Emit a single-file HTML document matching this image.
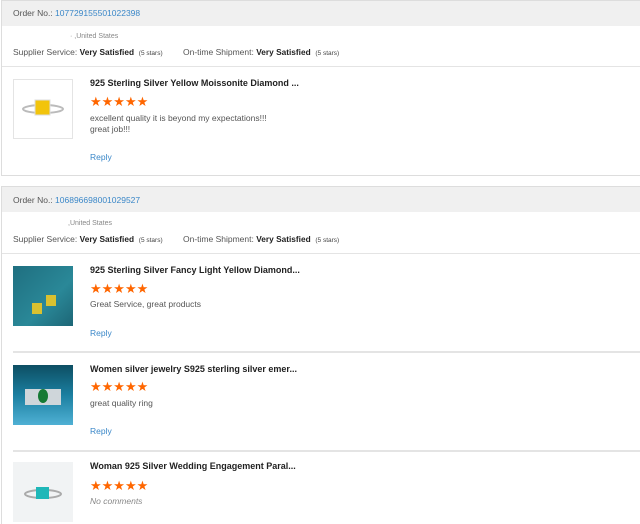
<!DOCTYPE html>
<html style="overflow:hidden;height:524px"><head><style>
body{margin:0;width:640px;height:524px;overflow:hidden;background:#fff;font-family:"Liberation Sans",Arial,sans-serif;position:relative;color:#333}
.a{position:absolute;white-space:nowrap}
.card{position:absolute;left:1px;width:650px;border:1px solid #ddd;background:#fff}
.hd{position:absolute;left:0;top:0;right:0;height:25px;background:#f0f0f0}
.lbl{font-size:8.5px;color:#555}
.b{font-weight:bold;color:#222;font-size:8.3px}
.sm{font-size:6.5px;color:#444}
.t{font-size:9px;font-weight:bold;color:#222;letter-spacing:0}
.st{color:#f60;font-size:13px;line-height:12px}
.c{font-size:8.5px;color:#555}
.r{font-size:8.5px;color:#3a87c8}
.ln{position:absolute;height:1px;background:#e4e4e4}
.img{position:absolute;left:13px;width:60px;height:60px}
</style></head><body>
<div class="card" style="top:0;height:174px"><div class="hd"></div></div>
<div class="a lbl" style="left:13px;top:8px">Order No.: <span style="color:#3a87c8">107729155501022398</span></div>
<div class="a" style="left:70px;top:33px;font-size:7px;color:#888">· ,United States</div>
<div class="a lbl" style="left:13px;top:47px">Supplier Service: <span class="b">Very Satisfied</span> &nbsp;<span class="sm">(5 stars)</span></div>
<div class="a lbl" style="left:183px;top:47px">On-time Shipment: <span class="b">Very Satisfied</span> &nbsp;<span class="sm">(5 stars)</span></div>
<div class="ln" style="left:2px;top:66px;width:640px"></div>
<div class="img" style="top:79px;border:1px solid #e4e4e4;width:58px;height:58px;background:#fff">
<svg width="58" height="58"><ellipse cx="29" cy="29" rx="20" ry="4" fill="none" stroke="#bbb" stroke-width="2"/><rect x="21" y="20" width="15" height="15" fill="#f2c40c" stroke="#ddd"/></svg></div>
<div class="a t" style="left:90px;top:78px">925 Sterling Silver Yellow Moissonite Diamond ...</div>
<div class="a st" style="left:90px;top:96px">★★★★★</div>
<div class="a c" style="left:90px;top:113px">excellent quality it is beyond my expectations!!!</div>
<div class="a c" style="left:90px;top:124px">great job!!!</div>
<div class="a r" style="left:90px;top:152px">Reply</div>

<div class="card" style="top:186px;height:340px"><div class="hd"></div></div>
<div class="a lbl" style="left:13px;top:195px">Order No.: <span style="color:#3a87c8">106896698001029527</span></div>
<div class="a" style="left:68px;top:220px;font-size:7px;color:#888">,United States</div>
<div class="a lbl" style="left:13px;top:234px">Supplier Service: <span class="b">Very Satisfied</span> &nbsp;<span class="sm">(5 stars)</span></div>
<div class="a lbl" style="left:183px;top:234px">On-time Shipment: <span class="b">Very Satisfied</span> &nbsp;<span class="sm">(5 stars)</span></div>
<div class="ln" style="left:2px;top:253px;width:640px"></div>

<div class="img" style="top:266px;background:linear-gradient(135deg,#1f6f80,#2a8898 60%,#1d6676)">
<svg width="60" height="60"><rect x="19" y="37" width="10" height="11" fill="#d9c130"/><rect x="33" y="29" width="10" height="11" fill="#d9c130"/></svg></div>
<div class="a t" style="left:90px;top:265px">925 Sterling Silver Fancy Light Yellow Diamond...</div>
<div class="a st" style="left:90px;top:283px">★★★★★</div>
<div class="a c" style="left:90px;top:299px">Great Service, great products</div>
<div class="a r" style="left:90px;top:328px">Reply</div>
<div class="ln" style="left:13px;top:351px;width:630px;height:2px"></div>

<div class="img" style="top:365px;background:linear-gradient(180deg,#0d4e63,#1b7fa0 50%,#4fb0d4)">
<svg width="60" height="60"><rect x="12" y="24" width="36" height="16" fill="#cfd6da"/><ellipse cx="30" cy="31" rx="5" ry="7" fill="#167a34"/></svg></div>
<div class="a t" style="left:90px;top:364px">Women silver jewelry S925 sterling silver emer...</div>
<div class="a st" style="left:90px;top:381px">★★★★★</div>
<div class="a c" style="left:90px;top:398px">great quality ring</div>
<div class="a r" style="left:90px;top:426px">Reply</div>
<div class="ln" style="left:13px;top:450px;width:630px;height:2px"></div>

<div class="img" style="top:462px;background:#f1f3f4">
<svg width="60" height="60"><ellipse cx="30" cy="32" rx="18" ry="4" fill="none" stroke="#aaa" stroke-width="2"/><rect x="23" y="25" width="13" height="12" fill="#1fb7b8"/></svg></div>
<div class="a t" style="left:90px;top:461px">Woman 925 Silver Wedding Engagement Paral...</div>
<div class="a st" style="left:90px;top:480px">★★★★★</div>
<div class="a c" style="left:90px;top:496px;font-style:italic;color:#888">No comments</div>
</body></html>
